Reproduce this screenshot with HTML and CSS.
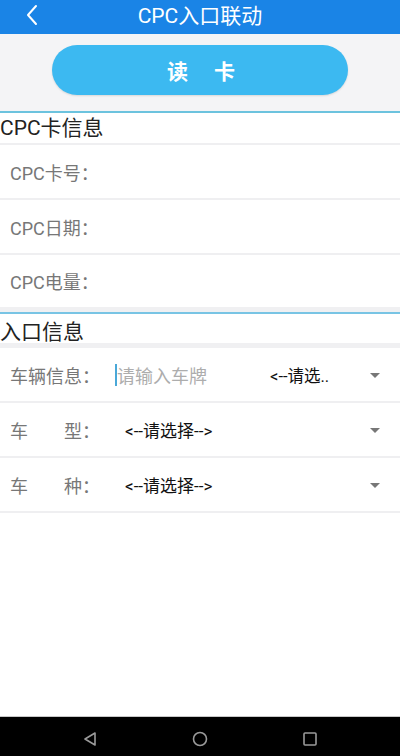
FILE: index.html
```html
<!DOCTYPE html>
<html lang="zh-CN">
<head>
<meta charset="utf-8">
<title>CPC入口联动</title>
<link rel="stylesheet" href="styles.css">
</head>
<body>
<div class="screen">
  <header class="appbar">
    <svg class="back" width="14" height="22" viewBox="0 0 14 22"><path d="M11 2 L3 11 L11 20" fill="none" stroke="#fff" stroke-width="2" stroke-linecap="round" stroke-linejoin="round"/></svg>
    <h1 class="title">CPC入口联动</h1>
  </header>
  <div class="btn-area">
    <button class="read-btn"><span>读</span><span>卡</span></button>
  </div>
  <section class="group first">
    <div class="group-title">CPC卡信息</div>
    <div class="row"><span class="label">CPC卡号：</span></div>
    <div class="row"><span class="label">CPC日期：</span></div>
    <div class="row last"><span class="label">CPC电量：</span></div>
  </section>
  <section class="group second">
    <div class="group-title thick">入口信息</div>
    <div class="row">
      <span class="label">车辆信息：</span>
      <span class="input"><i class="cursor"></i>请输入车牌</span>
      <span class="select short">&lt;--请选..</span>
      <span class="caret"></span>
    </div>
    <div class="row">
      <span class="label">车　　型：</span>
      <span class="select wide">&lt;--请选择--&gt;</span>
      <span class="caret"></span>
    </div>
    <div class="row">
      <span class="label">车　　种：</span>
      <span class="select wide">&lt;--请选择--&gt;</span>
      <span class="caret"></span>
    </div>
  </section>
  <div class="spacer"></div>
  <nav class="navbar">
    <svg width="16" height="16" viewBox="0 0 16 16"><path d="M13 2 L3 8 L13 14 Z" fill="none" stroke="#9a9a9a" stroke-width="1.6" stroke-linejoin="round"/></svg>
    <svg width="16" height="16" viewBox="0 0 16 16"><circle cx="8" cy="8" r="6.5" fill="none" stroke="#9a9a9a" stroke-width="1.6"/></svg>
    <svg width="16" height="16" viewBox="0 0 16 16"><rect x="2" y="2" width="12" height="12" rx="1" fill="none" stroke="#9a9a9a" stroke-width="1.6"/></svg>
  </nav>
</div>
</body>
</html>
```

FILE: styles.css
```css
* { box-sizing: border-box; }
html, body { margin: 0; padding: 0; }
body {
  font-family: Roboto, "Noto Sans CJK SC", sans-serif;
  background: #fff;
}
.screen {
  width: 400px;
  height: 756px;
  display: flex;
  flex-direction: column;
  overflow: hidden;
}
.appbar {
  height: 34px;
  background: #1a84e6;
  display: flex;
  align-items: center;
  justify-content: center;
  position: relative;
}
.back {
  position: absolute;
  left: 25px;
  top: 4px;
}
.title {
  margin: 0;
  color: #fff;
  font-size: 21px;
  font-weight: normal;
  line-height: 34px;
  margin-top: -3px;
}
.btn-area {
  height: 77px;
  background: #f4f4f6;
  display: flex;
  justify-content: center;
  padding-top: 11px;
}
.read-btn {
  width: 296px;
  height: 50px;
  border: none;
  border-radius: 25px;
  background: #3cb9f1;
  color: #fff;
  font-family: Roboto, "Noto Sans CJK SC", sans-serif;
  font-size: 21px;
  font-weight: bold;
  display: flex;
  align-items: center;
  justify-content: center;
  gap: 26px;
  padding: 0 0 0 2px;
  box-shadow: 0 1px 2px rgba(0,0,0,0.12);
}
.group {
  border-top: 2px solid #6cc3de;
  background: #fff;
}
.group.second { border-top-color: #78c4e4; }
.group-title {
  height: 32px;
  line-height: 30px;
  font-size: 21px;
  color: #222;
  border-bottom: 2px solid #efeff1;
}
.group-title.thick {
  height: 34px;
  padding-top: 3px;
  line-height: 30px;
  border-bottom: 5px solid #f0f0f2;
}
.row {
  height: 55px;
  display: flex;
  align-items: center;
  border-bottom: 2px solid #efeff1;
  padding-left: 10px;
  position: relative;
}
.row.last {
  height: 57px;
  border-bottom: 5px solid #f0f0f2;
}
.label {
  font-size: 18px;
  color: #777;
  width: 105px;
  flex: none;
  white-space: nowrap;
}
.input {
  font-size: 18px;
  color: #adadad;
  display: flex;
  align-items: center;
  width: 155px;
  flex: none;
}
.cursor {
  display: inline-block;
  width: 2px;
  height: 22px;
  background: #4aa8d8;
}
.select {
  font-size: 17px;
  color: #111;
  white-space: nowrap;
}
.select.short { font-size: 16.5px; }
.select.wide { margin-left: 10px; }
.caret {
  position: absolute;
  right: 20px;
  top: 50%;
  margin-top: -2px;
  width: 0;
  height: 0;
  border-left: 5px solid transparent;
  border-right: 5px solid transparent;
  border-top: 5px solid #777;
}
.spacer { flex: 1; }
.navbar {
  height: 40px;
  background: #000;
  border-top: 1px solid #c8c8c8;
  display: flex;
  align-items: center;
  justify-content: center;
  gap: 94px;
  padding-top: 4px;
}
.navbar svg { display: block; }
```
